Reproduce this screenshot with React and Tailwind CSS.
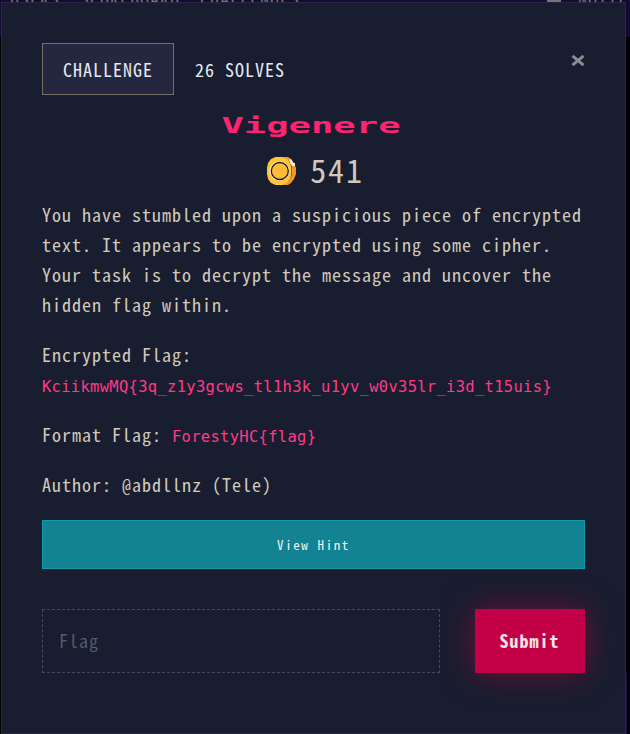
const MONO = "font-['Noto_Sans_Mono_CJK_SC','Liberation_Mono',monospace]";

function Backdrop() {
  return (
    <div className="flex h-[2px] shrink-0 items-end overflow-hidden bg-[#160b33] pl-[10px] text-[18px] leading-[18px] tracking-[1px] text-[#77736f]">
      <span className="w-[70px] shrink-0 translate-y-[5px] font-['Noto_Sans_Mono_CJK_SC','Liberation_Mono',monospace]">USERS</span>
      <span className="w-[120px] shrink-0 translate-y-[5px] font-['Noto_Sans_Mono_CJK_SC','Liberation_Mono',monospace]">SCOREBOARD</span>
      <span className="w-[347px] shrink-0 translate-y-[5px] font-['Noto_Sans_Mono_CJK_SC','Liberation_Mono',monospace]">CHALLENGES</span>
      <span className="h-[2px] w-[14px] shrink-0 bg-[#77736f]" />
      <span className="ml-[17px] shrink-0 translate-y-[5px] font-['Noto_Sans_Mono_CJK_SC','Liberation_Mono',monospace]">NOTIFICATIONS</span>
    </div>
  );
}

function Coin() {
  return (
    <svg width="29" height="28" viewBox="0 0 29 28">
      <path fill="#ef962c" d="M14 0h7l3 2 3 4 2 5v6l-2 5-3 4-3 2h-7z" />
      <path fill="#241c28" d="M17 .5l5 4 3 6v7l-3 6-5 4z" />
      <path fill="#fff6df" d="M22 2.5h2.5l1.5 3.5h2v3h-2.5L24 7z" />
      <path fill="#ffc53a" d="M8.500 0h7l4.500 2 3 4 1.500 5v6l-1.500 5-3 4-4.500 2h-7L4 26 1 22l-1-5v-6l1-5 3-4z" />
      <circle cx="12.500" cy="14" r="9.100" fill="#ffc53a" stroke="#fff6df" strokeWidth="1.300" />
      <circle cx="12.800" cy="14" r="8.500" fill="#ffbd35" stroke="#241c28" strokeWidth="1.300" />
    </svg>
  );
}

function Code({ children }) {
  return (
    <code className="font-['DejaVu_Sans_Mono',monospace] text-[15.5px] leading-none tracking-[0.29px] text-[#ff3b86]">
      {children}
    </code>
  );
}

export default function App() {
  return (
    <div className="flex h-[734px] w-[630px] flex-col overflow-hidden bg-[#05030d]">
      <Backdrop />
      <div className="flex flex-1">
        <div className="w-px bg-linear-to-b from-[#160b33] from-[35px] to-black to-[35px]" />
        <main className={`${MONO} flex w-[625px] flex-col border border-[#242844] bg-[#181d2f] px-[40px] text-[18px] leading-[30px] tracking-[1px] text-[#d2c9bb]`}>
          <header className="mt-[40px] flex h-[52px] items-center text-[#e3eaf2]">
            <div className="flex h-[52px] w-[132px] items-center border border-[#756f69] bg-[#24273f] pl-[20px]">CHALLENGE</div>
            <div className="ml-[21px]">26 SOLVES</div>
            <svg className="mb-[17px] ml-auto" width="14" height="11" viewBox="0 0 14 12" fill="none" stroke="#8b8d95" strokeWidth="3.2">
              <path d="M1 1L13 11M13 1L1 11" />
            </svg>
          </header>
          <h2 className="mt-[15px] flex h-[32px] items-center justify-center">
            <span className="mr-[6px] inline-block scale-x-[1.69] font-['DejaVu_Sans_Mono',monospace] text-[22px] font-bold leading-[32px] tracking-normal text-[#ff2372]">Vigenere</span>
          </h2>
          <div className="mt-[9px] flex h-[40px] items-center justify-center gap-[14px] pl-[4px]">
            <Coin />
            <span className="pb-[5px] text-[32px] leading-[40px] tracking-[1.8px]">541</span>
          </div>
          <p className="mt-[8px] whitespace-nowrap">
            You have stumbled upon a suspicious piece of encrypted<br />
            text. It appears to be encrypted using some cipher.<br />
            Your task is to decrypt the message and uncover the<br />
            hidden flag within.
          </p>
          <p className="mt-[20px] h-[60px] whitespace-nowrap">
            Encrypted Flag:<br />
            <Code>{"KciikmwMQ{3q_z1y3gcws_tl1h3k_u1yv_w0v35lr_i3d_t15uis}"}</Code>
          </p>
          <p className="mt-[20px] h-[30px]">Format Flag: <Code>{"ForestyHC{flag}"}</Code></p>
          <p className="mt-[20px] h-[30px]">Author: @abdllnz (Tele)</p>
          <button className="mt-[21px] h-[49px] w-[543px] shrink-0 border border-[#109bad] bg-[#138292] text-[13px] tracking-[1.6px] text-[#f2f5f3]">View Hint</button>
          <form className="mt-[40px] flex h-[64px] justify-between">
            <input placeholder="Flag" className="w-[398px] border border-dashed border-[#454b57] bg-transparent px-[16px] pb-[2px] tracking-[1px] placeholder:text-[#555a64]" />
            <button type="button" className="w-[110px] bg-[#c30045] pr-px pb-[2px] font-bold tracking-[1px] text-[#f0e3e3] shadow-[0_0_32px_#c3004580]">Submit</button>
          </form>
        </main>
        <div className="flex flex-1 flex-col">
          <div className="h-[35px] bg-[#160836]" />
          <div className="flex-1 bg-black" />
          <div className="flex h-[61px]">
            <div className="w-px bg-[#1b0b50]" />
            <div className="flex-1 bg-black" />
          </div>
        </div>
      </div>
    </div>
  );
}
